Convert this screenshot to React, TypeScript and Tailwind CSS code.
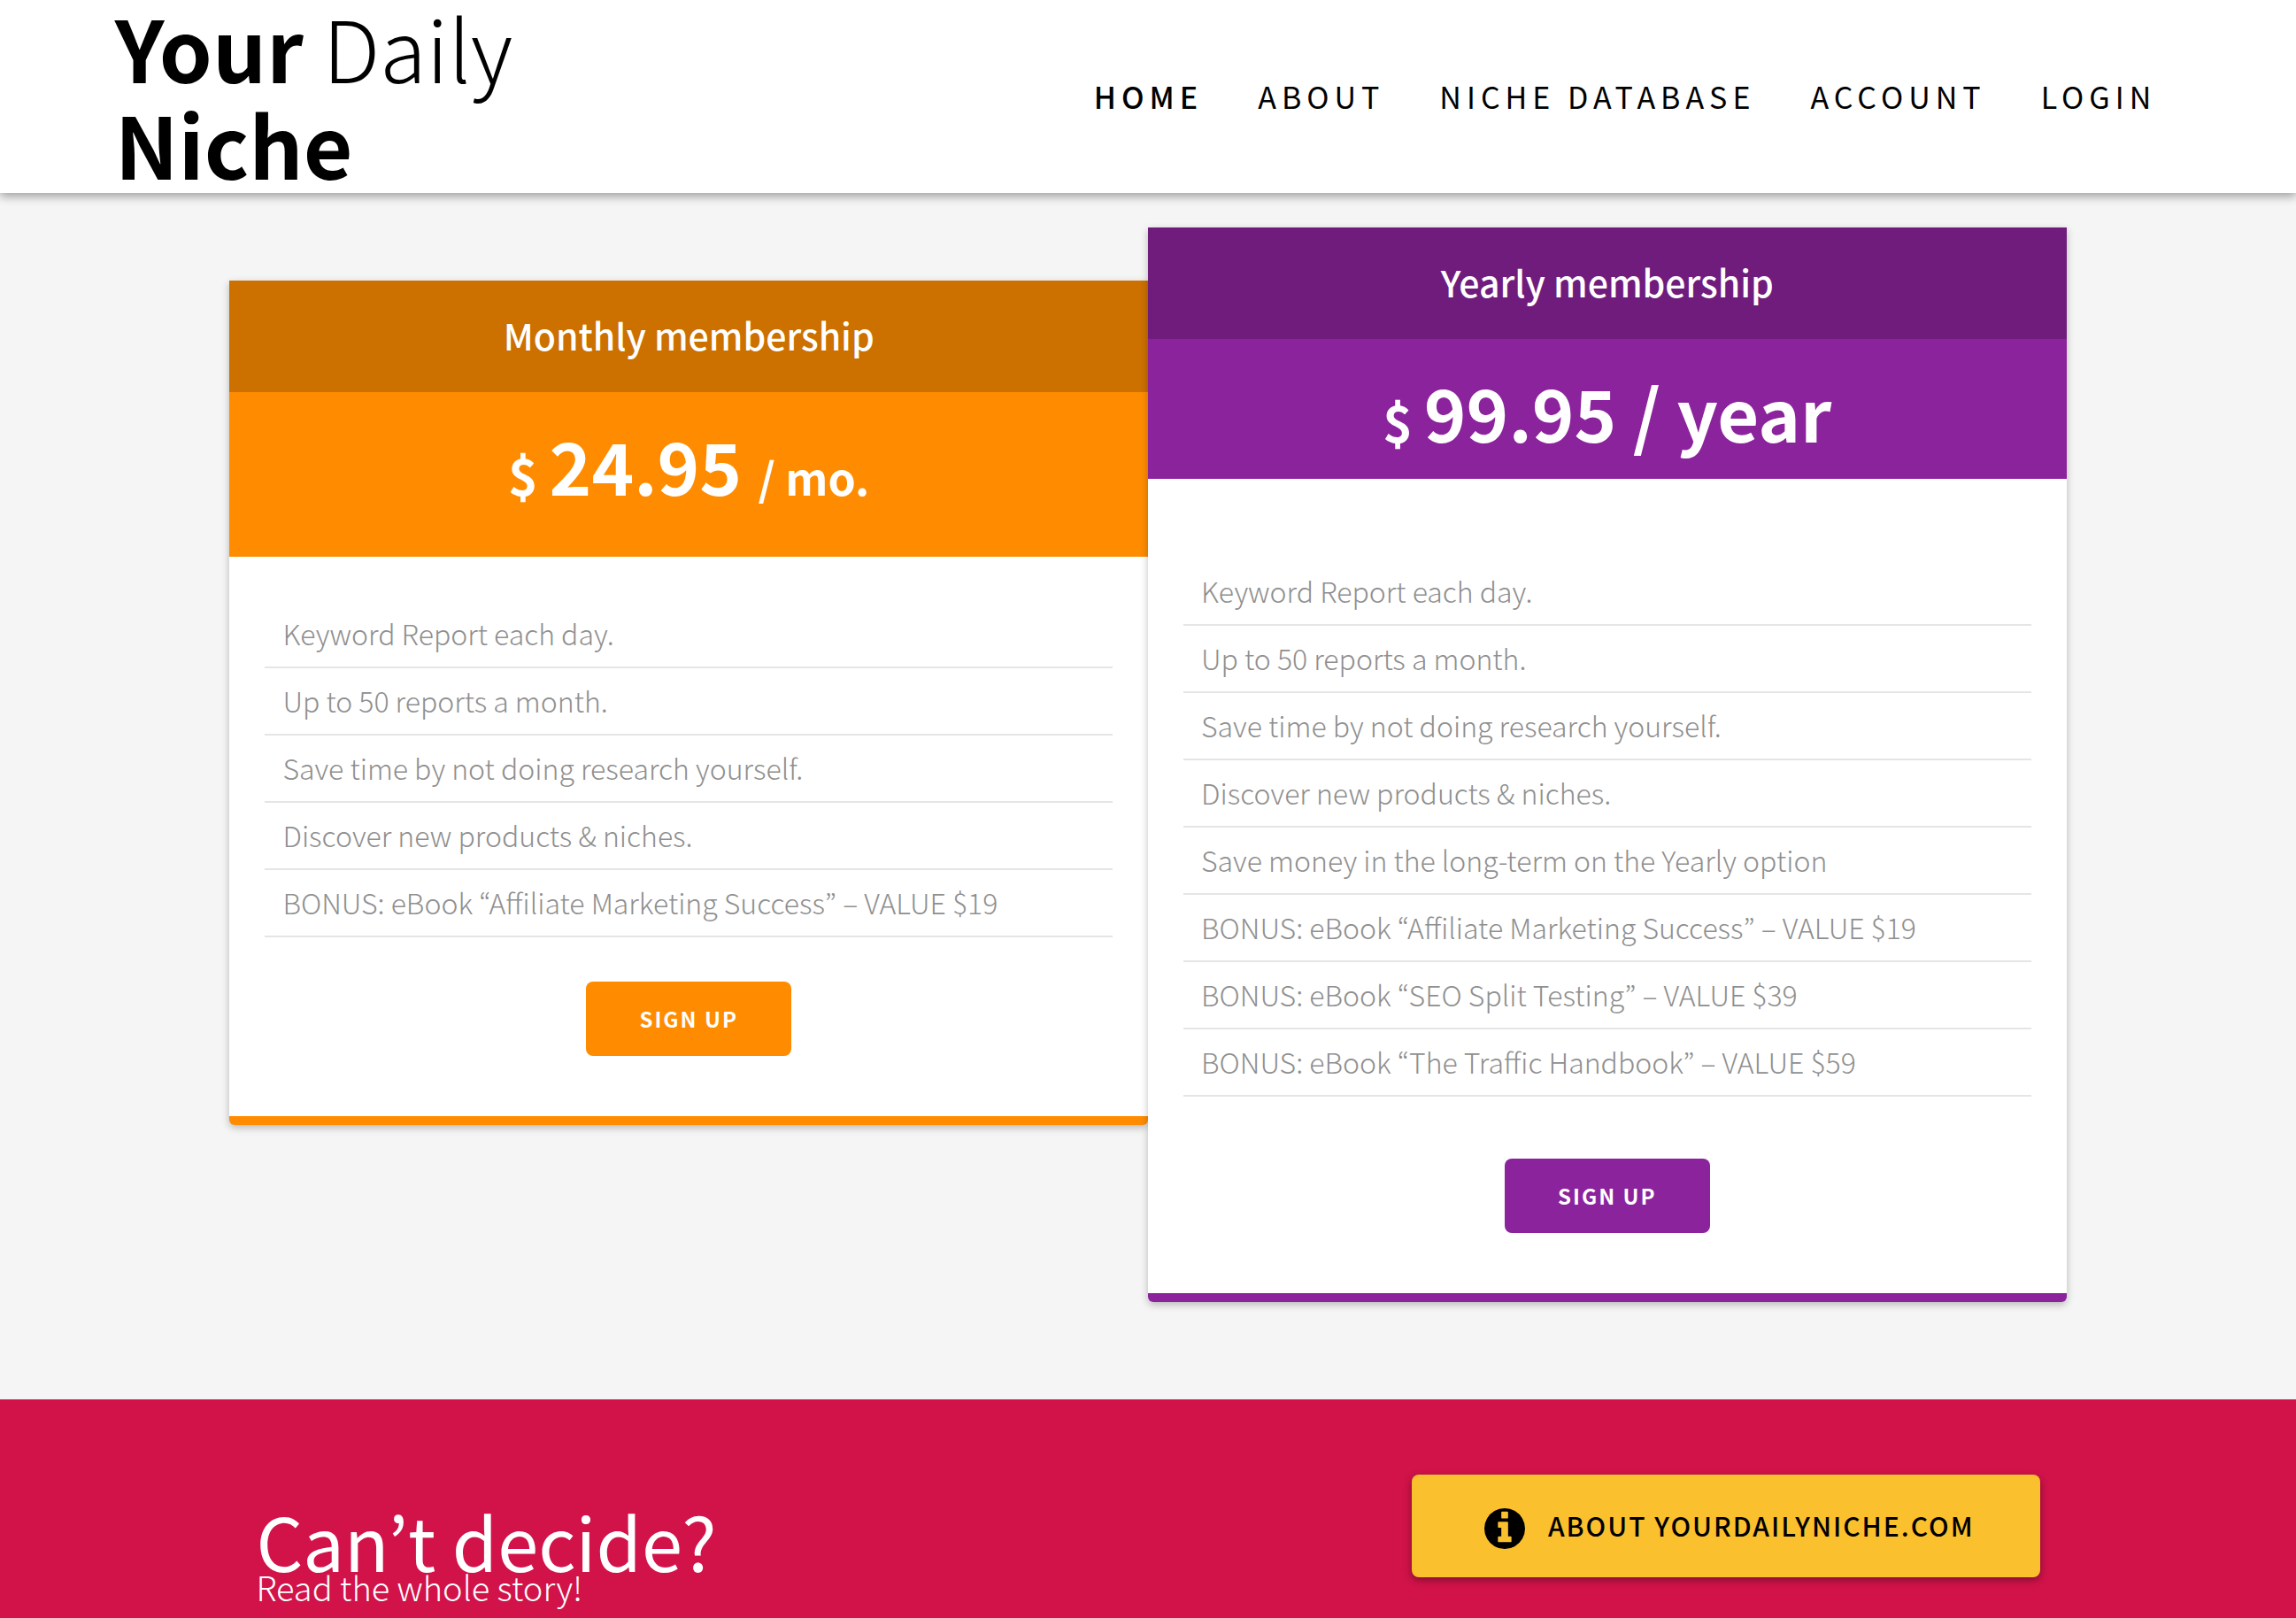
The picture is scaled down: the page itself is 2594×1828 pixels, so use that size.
const navLinks = ["Home", "About", "Niche Database", "Account", "Login"];

const monthlyFeatures = [
  "Keyword Report each day.",
  "Up to 50 reports a month.",
  "Save time by not doing research yourself.",
  "Discover new products & niches.",
  "BONUS: eBook “Affiliate Marketing Success” – VALUE $19",
];

const yearlyFeatures = [
  "Keyword Report each day.",
  "Up to 50 reports a month.",
  "Save time by not doing research yourself.",
  "Discover new products & niches.",
  "Save money in the long-term on the Yearly option",
  "BONUS: eBook “Affiliate Marketing Success” – VALUE $19",
  "BONUS: eBook “SEO Split Testing” – VALUE $39",
  "BONUS: eBook “The Traffic Handbook” – VALUE $59",
];

function Header() {
  return (
    <header className="relative z-10 flex items-center justify-between bg-white px-[5%] pb-0.5 text-black shadow-[0_4px_10px_rgba(0,0,0,0.35)]">
      <a href="#home" className="-mt-0.5 w-[500px] text-[96px] leading-[109px] font-bold">
        Your <span className="font-light">Daily</span> Niche
      </a>
      <nav aria-label="Main" className="flex gap-[62px] pt-0.5 pr-7 uppercase">
        {navLinks.map((label, i) => (
          <a
            key={label}
            href={`#${label.toLowerCase().replace(" ", "-")}`}
            aria-current={i === 0 ? "page" : undefined}
            className="text-[34px] leading-[48px] font-normal tracking-[6px] whitespace-nowrap aria-[current=page]:font-medium"
          >
            {label}
          </a>
        ))}
      </nav>
    </header>
  );
}

function FeatureList({ items }: { items: string[] }) {
  return (
    <ul className="text-[32px] leading-[72px] font-light text-[#8f8f8f]">
      {items.map((item) => (
        <li key={item} className="border-b-2 border-[#e5e5e5] px-5 pb-0.5">
          {item}
        </li>
      ))}
    </ul>
  );
}

function Pricing() {
  return (
    <main className="flex items-start bg-[#f5f5f5] px-[10%] pt-[39px] pb-[110px]">
      <section
        aria-labelledby="monthly"
        className="mt-[60px] flex-1 rounded-b-[6px] border-b-[10px] border-[#ff8c00] bg-white shadow-[0_3px_8px_rgba(0,0,0,0.25)]"
      >
        <h2 id="monthly" className="bg-[#cc7000] pt-[30px] pb-[34px] text-center text-[41px] leading-[62px] font-medium text-white">
          Monthly membership
        </h2>
        <p className="bg-[#ff8c00] pt-8 pb-[54px] text-center text-[81px] leading-[100px] font-bold text-white">
          <span className="text-[57px] leading-none">$ </span>
          24.95 <span className="text-[50px] leading-none">/ mo.</span>
        </p>
        <div className="flex flex-col px-10 pt-[50px] pb-[68px]">
          <FeatureList items={monthlyFeatures} />
          <button
            type="button"
            className="mt-[50px] cursor-pointer self-center rounded-[8px] bg-[#ff8c00] px-[60px] py-[22px] text-[24px] leading-[40px] font-bold tracking-[2px] text-white"
          >
            SIGN UP
          </button>
        </div>
      </section>
      <section
        aria-labelledby="yearly"
        className="flex-1 rounded-b-[6px] border-b-[10px] border-[#8b239d] bg-white shadow-[0_3px_8px_rgba(0,0,0,0.25)]"
      >
        <h2 id="yearly" className="bg-[#6f1c7d] pt-[30px] pb-[34px] text-center text-[41px] leading-[62px] font-medium text-white">
          Yearly membership
        </h2>
        <p className="bg-[#8b239d] pt-8 pb-[26px] text-center text-[81px] leading-[100px] font-bold text-white">
          <span className="text-[57px] leading-none">$ </span>
          99.95 / year
        </p>
        <div className="flex flex-col px-10 pt-[90px] pb-[68px]">
          <FeatureList items={yearlyFeatures} />
          <button
            type="button"
            className="mt-[70px] cursor-pointer self-center rounded-[8px] bg-[#8b239d] px-[60px] py-[22px] text-[24px] leading-[40px] font-bold tracking-[2px] text-white"
          >
            SIGN UP
          </button>
        </div>
      </section>
    </main>
  );
}

function InfoIcon() {
  return (
    <svg viewBox="0 128 1536 1536" fill="currentColor" className="mt-2 size-[46px]" aria-hidden="true">
      <path d="M1024 1376v-160q0-14-9-23t-23-9h-96v-512q0-14-9-23t-23-9h-320q-14 0-23 9t-9 23v160q0 14 9 23t23 9h96v320h-96q-14 0-23 9t-9 23v160q0 14 9 23t23 9h448q14 0 23-9t9-23zm-128-896v-192q0-14-9-23t-23-9h-192q-14 0-23 9t-9 23v192q0 14 9 23t23 9h192q14 0 23-9t9-23zm640 416q0 209-103 385.5t-279.5 279.5-385.5 103-385.5-103-279.5-279.5-103-385.5 103-385.5 279.5-279.5 385.5-103 385.5 103 279.5 279.5 103 385.5z" />
    </svg>
  );
}

function CallToAction() {
  return (
    <section className="bg-[#d1134a] px-[10%] pt-[85px] text-white">
      <div className="flex items-start justify-between px-[30px]">
        <div className="pt-10">
          <h2 className="text-[83px] leading-[68px] font-normal">Can’t decide?</h2>
          <p className="text-[38px] leading-[38px] font-light">Read the whole story!</p>
        </div>
        <a
          href="#about"
          className="flex items-center gap-[26px] rounded-[8px] bg-[#fbc02d] pt-[30px] pb-8 pr-[74px] pl-[82px] text-[30px] leading-[54px] font-medium tracking-[2px] text-black shadow-[0_3px_8px_rgba(0,0,0,0.4)]"
        >
          <InfoIcon />
          ABOUT YOURDAILYNICHE.COM
        </a>
      </div>
    </section>
  );
}

export default function App() {
  return (
    <div className="min-h-screen bg-[#d1134a] font-['Noto_Sans_CJK_KR',sans-serif]">
      <Header />
      <Pricing />
      <CallToAction />
    </div>
  );
}
